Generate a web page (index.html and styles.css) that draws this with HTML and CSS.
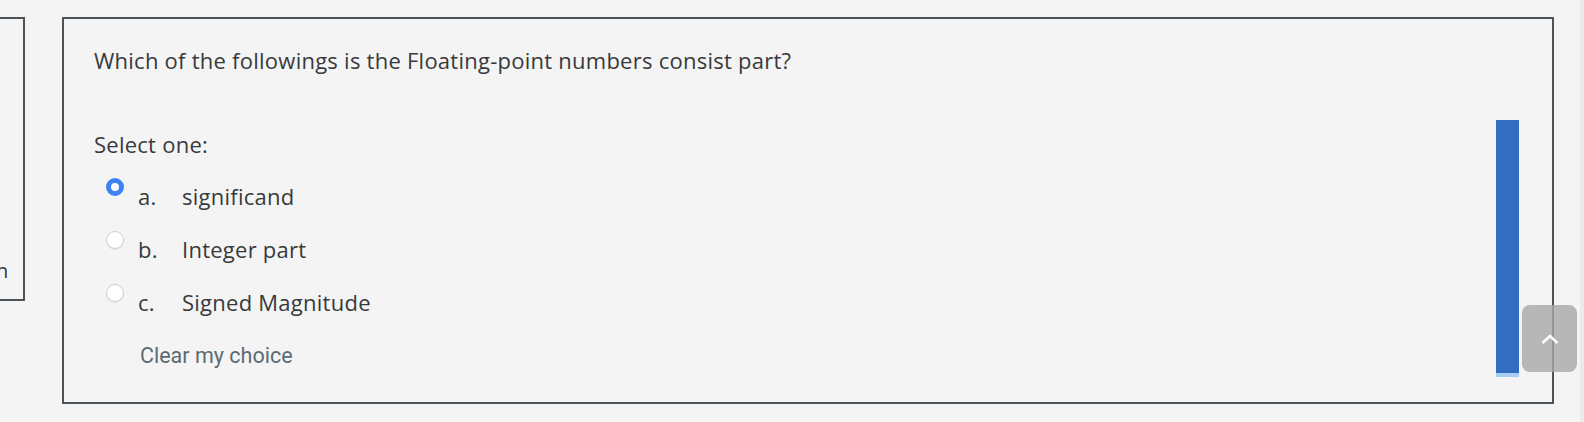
FILE: index.html
```html
<!DOCTYPE html>
<html lang="en">
<head>
<meta charset="utf-8">
<title>Question</title>
<link rel="stylesheet" href="styles.css">
</head>
<body>
<div class="page">
  <div class="side-box"><span class="side-text">n</span></div>
  <div class="que">
    <p class="qtext">Which of the followings is the Floating-point numbers consist part?</p>
    <div class="answer-block">
      <div class="prompt">Select one:</div>
      <div class="answers">
        <label class="opt"><span class="radio checked"></span><span class="letter">a.</span><span class="otext">significand</span></label>
        <label class="opt"><span class="radio"></span><span class="letter">b.</span><span class="otext">Integer part</span></label>
        <label class="opt"><span class="radio"></span><span class="letter">c.</span><span class="otext">Signed Magnitude</span></label>
      </div>
      <a class="clear">Clear my choice</a>
    </div>
    <div class="bluebar"></div>
  </div>
  <div class="scrollstrip"></div>
</div>
<button class="to-top" aria-label="Back to top">
  <svg width="18" height="12" viewBox="0 0 18 12"><path d="M1.5 10 L9 3 L16.5 10" fill="none" stroke="#ffffff" stroke-width="2.4"/></svg>
</button>
</body>
</html>
```
FILE: styles.css
```css
html, body {
  margin: 0;
  padding: 0;
  background: #f4f4f4;
  height: 422px;
  overflow: hidden;
}
.page {
  display: flex;
  align-items: flex-start;
  height: 422px;
  font-family: "Open Sans", "Noto Sans", sans-serif;
  color: #373a3c;
}
.side-box {
  box-sizing: border-box;
  width: 25px;
  height: 284px;
  margin-top: 17px;
  border: 2px solid #4b5358;
  border-left: none;
  position: relative;
  overflow: hidden;
}
.side-text {
  position: absolute;
  left: -4px;
  top: 238px;
  font-size: 20px;
  color: #373a3c;
}
.que {
  box-sizing: border-box;
  margin-left: 37px;
  margin-top: 17px;
  width: 1492px;
  height: 387px;
  border: 2px solid #4b5358;
  position: relative;
  padding: 26px 30px 0 30px;
}
.qtext {
  margin: 0;
  font-size: 22px;
  line-height: 30px;
  letter-spacing: 0.25px;
}
.answer-block {
  margin-top: 54px;
}
.prompt {
  font-size: 22px;
  line-height: 30px;
  letter-spacing: 0.25px;
}
.answers {
  display: flex;
  flex-direction: column;
  margin-top: 22px;
  gap: 23px;
}
.opt {
  display: flex;
  align-items: flex-start;
  padding-left: 12px;
  height: 30px;
  font-size: 22px;
  line-height: 30px;
  letter-spacing: 0.25px;
}
.radio {
  box-sizing: border-box;
  width: 18px;
  height: 18px;
  border-radius: 50%;
  border: 1px solid #cfcfcf;
  background: #fff;
  margin-top: -3px;
  flex: none;
  box-shadow: 0 1px 1px rgba(0, 0, 0, 0.06);
}
.radio.checked {
  border: 5px solid #3b82f6;
  background: #fff;
  box-shadow: none;
}
.letter {
  width: 44px;
  padding-left: 14px;
}
.clear {
  display: inline-block;
  margin-top: 27px;
  margin-left: 46px;
  font-family: Roboto, sans-serif;
  font-size: 21.5px;
  color: #5b6b75;
  line-height: 24px;
}
.bluebar {
  position: absolute;
  left: 1432px;
  top: 101px;
  width: 23px;
  height: 253px;
  background: #336dbf;
  border-bottom: 4px solid #a8cdf2;
}
.scrollstrip {
  position: absolute;
  right: 0;
  top: 0;
  width: 4px;
  height: 422px;
  background: #ebebeb;
}
.to-top {
  position: absolute;
  left: 1522px;
  top: 305px;
  width: 55px;
  height: 67px;
  border: none;
  border-radius: 8px;
  background: rgba(168, 168, 168, 0.8);
  display: flex;
  align-items: center;
  justify-content: center;
  padding: 0;
}
```
